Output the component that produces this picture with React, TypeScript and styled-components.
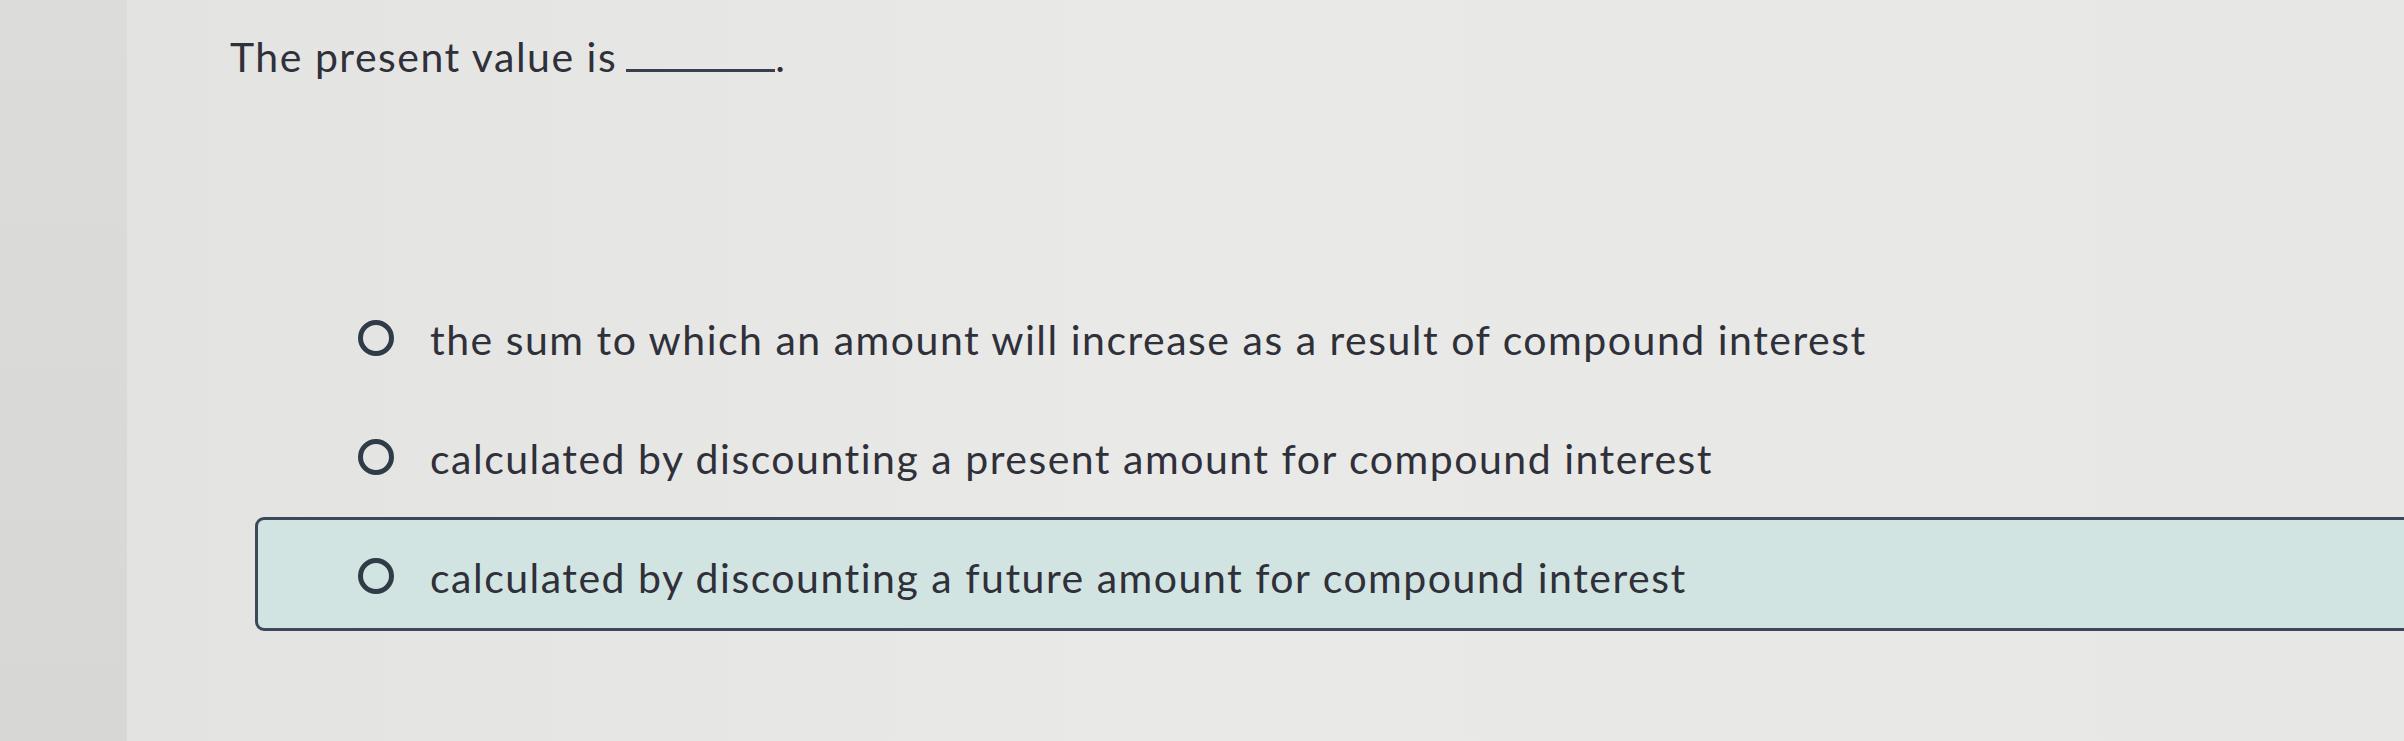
import React from "react";
import styled, { createGlobalStyle } from "styled-components";

const GlobalStyle = createGlobalStyle`
  html, body {
    margin: 0;
    padding: 0;
    overflow: hidden;
    background: #e4e4e2;
  }
  #root {
    height: 741px;
  }
`;

const Page = styled.div`
  display: flex;
  height: 741px;
  width: 2404px;
  overflow: hidden;
  font-family: "Lato", "Liberation Sans", sans-serif;
  font-variant-ligatures: none;
  color: #2f3039;
`;

const LeftStrip = styled.div`
  flex: 0 0 127px;
  background: linear-gradient(180deg, #dcdcda 0%, #d7d7d5 100%);
`;

const Main = styled.main`
  flex: 1;
  display: flex;
  flex-direction: column;
  background: linear-gradient(90deg, #e3e3e1 0%, #e9e9e7 45%, #e7e7e5 100%);
`;

const Question = styled.p`
  margin: 29px 0 0 103px;
  font-size: 41px;
  line-height: 56px;
  letter-spacing: 1.5px;
  white-space: nowrap;
`;

const Blank = styled.span`
  display: inline-block;
  width: 149px;
  height: 3px;
  margin: 0 0 0 9px;
  background: #3a3f4d;
  vertical-align: baseline;
`;

const Options = styled.div`
  display: flex;
  flex-direction: column;
  gap: 5px;
  margin: 194px 0 0 128px;
`;

const Option = styled.label<{ $selected?: boolean }>`
  display: flex;
  align-items: center;
  height: 114px;
  box-sizing: border-box;
  padding: 6px 0 0 103px;
  margin-right: -40px;
  border: 3px solid ${(p) => (p.$selected ? "#3c4859" : "transparent")};
  border-radius: 9px;
  background: ${(p) => (p.$selected ? "#d2e4e1" : "transparent")};
  font-size: 41px;
  letter-spacing: 1.5px;
`;

const Radio = styled.span`
  flex: 0 0 auto;
  width: 36px;
  height: 36px;
  box-sizing: border-box;
  border: 5px solid #2f3c48;
  border-radius: 50%;
  margin: -2px 36px 0 -3px;
`;

const OptionText = styled.span`
  white-space: nowrap;
`;

const options = [
  "the sum to which an amount will increase as a result of compound interest",
  "calculated by discounting a present amount for compound interest",
  "calculated by discounting a future amount for compound interest",
];

export default function App() {
  return (
    <>
      <GlobalStyle />
      <Page>
        <LeftStrip />
        <Main>
          <Question>
            The present value is<Blank />.
          </Question>
          <Options>
            {options.map((text, i) => (
              <Option key={i} $selected={i === 2}>
                <Radio />
                <OptionText>{text}</OptionText>
              </Option>
            ))}
          </Options>
        </Main>
      </Page>
    </>
  );
}
